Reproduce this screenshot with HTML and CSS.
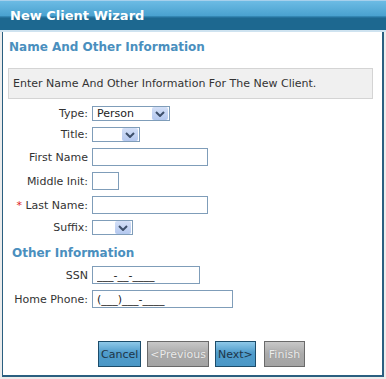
FILE: index.html
```html
<!DOCTYPE html>
<html>
<head>
    <meta charset="UTF-8" />
    <title>New Client Wizard</title>
    <link rel="stylesheet" href="styles.css">
</head>
<body>
    <div class="wizard">
        <div class="wizard-title">New Client Wizard</div>
        <div class="wizard-body">
            <h2 class="section">Name And Other Information</h2>
            <div class="info">Enter Name And Other Information For The New Client.</div>

            <div class="form">
                <label>Type:</label>
                <div class="select w-type"><span>Person</span><span class="arrow"><svg width="10" height="6" viewBox="0 0 10 6"><path d="M1 1 L5 5 L9 1" fill="none" stroke="#3d4f6a" stroke-width="2"/></svg></span></div>

                <label>Title:</label>
                <div class="select w-title"><span></span><span class="arrow"><svg width="10" height="6" viewBox="0 0 10 6"><path d="M1 1 L5 5 L9 1" fill="none" stroke="#3d4f6a" stroke-width="2"/></svg></span></div>

                <label>First Name</label>
                <input type="text" class="w-name">

                <label>Middle Init:</label>
                <input type="text" class="w-init">

                <label><span class="req">*</span> Last Name:</label>
                <input type="text" class="w-name">

                <label>Suffix:</label>
                <div class="select w-suffix"><span></span><span class="arrow"><svg width="10" height="6" viewBox="0 0 10 6"><path d="M1 1 L5 5 L9 1" fill="none" stroke="#3d4f6a" stroke-width="2"/></svg></span></div>
            </div>

            <h3 class="section small">Other Information</h3>

            <div class="form second">
                <label>SSN</label>
                <input type="text" class="w-ssn" value="___-__-____">

                <label>Home Phone:</label>
                <input type="text" class="w-phone" value="(___)___-____">
            </div>

            <div class="buttons">
                <button class="btn blue">Cancel</button>
                <button class="btn grey prev">&lt;Previous</button>
                <button class="btn blue next">Next&gt;</button>
                <button class="btn grey finish">Finish</button>
            </div>
        </div>
    </div>
</body>
</html>
```

FILE: styles.css
```css
* {
    margin: 0;
    padding: 0;
    box-sizing: border-box;
}
body {
    font-family: Verdana, "DejaVu Sans", sans-serif;
    font-size: 11px;
    color: #333;
    background-color: #ececec;
    width: 386px;
    height: 379px;
}
.wizard {
    width: 386px;
}
.wizard-title {
    height: 32px;
    padding: 7px 10px 0;
    font-size: 13px;
    font-weight: bold;
    color: white;
    border-top: 1px solid #a6d0ec;
    border-bottom: 2px solid #cfe3f0;
    background: linear-gradient(to bottom, #6cbbe4 0%, #4aa2d0 50%, #2a7aa6 55%, #1d6890 60%, #1d6890 100%);
}
.wizard-body {
    margin-left: 2px;
    width: 382px;
    height: 345px;
    background-color: white;
    border-left: 1px solid #2a5f80;
    border-right: 2px solid #2a5f80;
    border-bottom: 2px solid #2a5f80;
    padding: 8px 9px 0 5px;
}
.section {
    font-size: 12px;
    font-weight: bold;
    color: #4a8fbe;
    margin-left: 1px;
}
.section.small {
    margin: 11px 0 0 4px;
}
.info {
    margin-top: 14px;
    height: 31px;
    padding: 0 4px;
    line-height: 29px;
    background-color: #f0f0f0;
    border: 1px solid #d4d4d4;
    color: #333;
}
.form {
    display: grid;
    grid-template-columns: 80px auto;
    justify-content: start;
    align-items: center;
    column-gap: 4px;
    row-gap: 6px;
    margin-top: 7px;
}
.form.second {
    margin-top: 6px;
}
.form label {
    text-align: right;
    color: #333;
}
.req {
    color: #d22;
}
.form input {
    height: 18px;
    border: 1px solid #7f9db9;
    font-family: inherit;
    font-size: 11px;
    padding: 0 4px;
    color: #222;
}
.w-name { width: 116px; }
.w-init { width: 27px; }
.w-ssn { width: 108px; }
.w-phone { width: 141px; }
.select {
    display: flex;
    align-items: center;
    justify-content: space-between;
    height: 15px;
    border: 1px solid #7f9db9;
    padding: 0 1px 0 4px;
    background-color: white;
    color: #222;
}
.w-type { width: 78px; }
.w-title { width: 48px; }
.w-suffix { width: 41px; }
.arrow {
    display: flex;
    align-items: center;
    justify-content: center;
    width: 16px;
    height: 13px;
    background: linear-gradient(to bottom, #d4e0f7, #b4c8ef);
    border-radius: 2px;
}
.buttons {
    display: flex;
    gap: 5px;
    margin: 33px 0 0 90px;
}
.btn {
    height: 26px;
    padding: 0 2px;
    font-family: inherit;
    font-size: 11px;
    border: 1px solid #1c4c6a;
}
.btn.blue {
    color: #1e3548;
    background: linear-gradient(to bottom, #8ec8e8 0%, #4f9ccb 45%, #4a97c6 100%);
}
.btn.grey {
    color: #ececec;
    border-color: #6a6a6a;
    background: linear-gradient(to bottom, #c8c8c8 0%, #aaaaaa 50%, #a4a4a4 100%);
    text-shadow: 0 0 1px #888;
}
.prev {
    margin-left: 1px;
}
.next {
    margin-left: 1px;
}
.finish {
    margin-left: 3px;
    padding: 0 4px;
}
```
